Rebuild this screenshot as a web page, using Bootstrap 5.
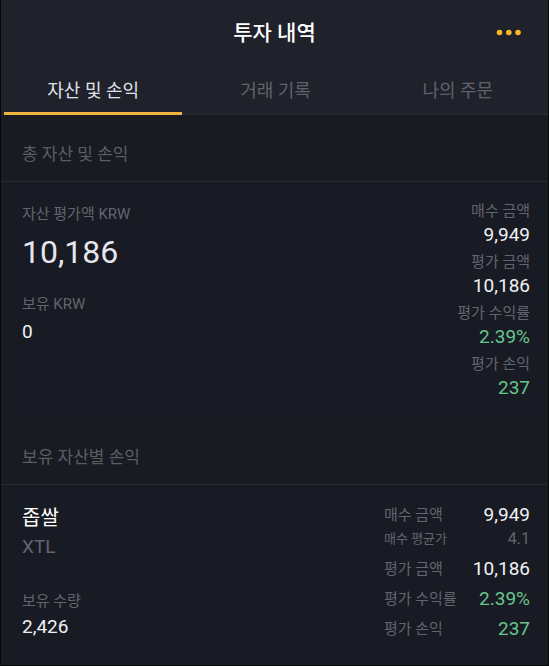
<!DOCTYPE html>
<html lang="ko" data-bs-theme="dark">
<head>
<meta charset="utf-8">
<meta name="viewport" content="width=device-width, initial-scale=1">
<title>투자 내역</title>
<link rel="stylesheet" href="https://cdn.jsdelivr.net/npm/bootstrap@5.3.0/dist/css/bootstrap.min.css">
<style>
  body { background: #181b24; color: #f0f1f4; font-family: Roboto, "Noto Sans CJK KR", sans-serif; }
  .app-frame { min-height: 100vh; border: 1px solid #05070b; border-top: 0; }
  .app-head { background: #1f222b; }
  .app-title { font-size: 21px; line-height: 32px; font-weight: 500; color: #fff; }
  .title-row { padding: 17px 26px 15px; }
  .side-slot { width: 26px; height: 32px; }
  .more-btn { color: #f9b729; line-height: 1; }
  .tab-bar { border-bottom: 2px solid #252935; }
  .tab-bar .nav-link { width: 100%; padding: 14px 0 8px; font-size: 18px; line-height: 26px; color: #5f626b; border-radius: 0; border-bottom: 3px solid transparent; margin-bottom: -2px; }
  .tab-bar .nav-link.active { color: #dfe1e8; border-bottom-color: #edb540; }
  .tab-bar .nav-item { padding: 0 1px 0 3px; }
  .section-title { margin: 0; padding: 26px 21px 14px; font-size: 17px; line-height: 26px; font-weight: 400; color: #5b5d65; background: #191b22; border-bottom: 1px solid #262a36; }
  .summary { padding: 19px 18px 17px 21px; }
  .holding { padding: 15px 18px 21px 21px; }
  .caption { font-size: 15px; line-height: 20px; font-weight: 400; color: #62656e; }
  .amount { font-size: 19px; line-height: 27px; font-weight: 400; margin: 0; }
  .total { font-size: 32px; line-height: 40px; margin: 8px 0 22px; color: #e6e7ed; }
  .pair + .pair { margin-top: 4px; }
  .gain { color: #68c68d; }
  .offset-top { padding-top: 3px; }
  .coin { font-size: 20px; line-height: 30px; font-weight: 400; margin: 0; }
  .ticker { font-size: 19px; line-height: 28px; color: #62656e; margin: 0 0 30px; }
  .held .amount { margin-top: 2px; }
  .stats { width: 146px; }
  .stats .amount, .stats .caption { line-height: 30px; }
  .stats .fine, .stats .fine .caption, .stats .fine .amount { line-height: 20px; }
  .stats .fine { margin: -1px 0 5px; }
  .stats .fine .caption { font-size: 13px; }
  .stats .fine .amount { font-size: 16px; color: #62656e; }
</style>
<script src="https://cdn.jsdelivr.net/npm/bootstrap@5.3.0/dist/js/bootstrap.bundle.min.js"></script>
</head>
<body>
<div class="app-frame">
  <header class="app-head">
    <div class="title-row d-flex align-items-center justify-content-between">
      <span class="side-slot"></span>
      <h1 class="app-title m-0">투자 내역</h1>
      <button type="button" class="side-slot more-btn btn p-0 border-0 d-flex align-items-center justify-content-center" aria-label="더보기">
        <svg width="26" height="8" viewBox="0 0 26 8" fill="currentColor" aria-hidden="true"><circle cx="3.5" cy="3.5" r="2.8"/><circle cx="12.8" cy="3.5" r="2.8"/><circle cx="22" cy="3.5" r="2.8"/></svg>
      </button>
    </div>
    <nav aria-label="투자 내역">
      <ul class="tab-bar nav nav-fill row-cols-3">
        <li class="nav-item"><a class="nav-link active" href="#assets" aria-current="page">자산 및 손익</a></li>
        <li class="nav-item"><a class="nav-link" href="#history">거래 기록</a></li>
        <li class="nav-item"><a class="nav-link" href="#orders">나의 주문</a></li>
      </ul>
    </nav>
  </header>
  <main id="assets">
    <section>
      <h2 class="section-title">총 자산 및 손익</h2>
      <div class="summary d-flex justify-content-between">
        <dl class="offset-top m-0">
          <dt class="caption">자산 평가액 KRW</dt>
          <dd class="total">10,186</dd>
          <dt class="caption">보유 KRW</dt>
          <dd class="amount mt-1">0</dd>
        </dl>
        <dl class="text-end m-0">
          <div class="pair"><dt class="caption">매수 금액</dt><dd class="amount">9,949</dd></div>
          <div class="pair"><dt class="caption">평가 금액</dt><dd class="amount">10,186</dd></div>
          <div class="pair"><dt class="caption">평가 수익률</dt><dd class="amount gain">2.39%</dd></div>
          <div class="pair"><dt class="caption">평가 손익</dt><dd class="amount gain">237</dd></div>
        </dl>
      </div>
    </section>
    <section>
      <h2 class="section-title">보유 자산별 손익</h2>
      <div class="holding d-flex justify-content-between">
        <div class="offset-top">
          <h3 class="coin">좁쌀</h3>
          <p class="ticker">XTL</p>
          <dl class="held m-0">
            <dt class="caption">보유 수량</dt>
            <dd class="amount">2,426</dd>
          </dl>
        </div>
        <dl class="stats m-0">
          <div class="d-flex justify-content-between"><dt class="caption">매수 금액</dt><dd class="amount">9,949</dd></div>
          <div class="fine d-flex justify-content-between"><dt class="caption">매수 평균가</dt><dd class="amount">4.1</dd></div>
          <div class="d-flex justify-content-between"><dt class="caption">평가 금액</dt><dd class="amount">10,186</dd></div>
          <div class="d-flex justify-content-between"><dt class="caption">평가 수익률</dt><dd class="amount gain">2.39%</dd></div>
          <div class="d-flex justify-content-between"><dt class="caption">평가 손익</dt><dd class="amount gain">237</dd></div>
        </dl>
      </div>
    </section>
  </main>
</div>
</body>
</html>
